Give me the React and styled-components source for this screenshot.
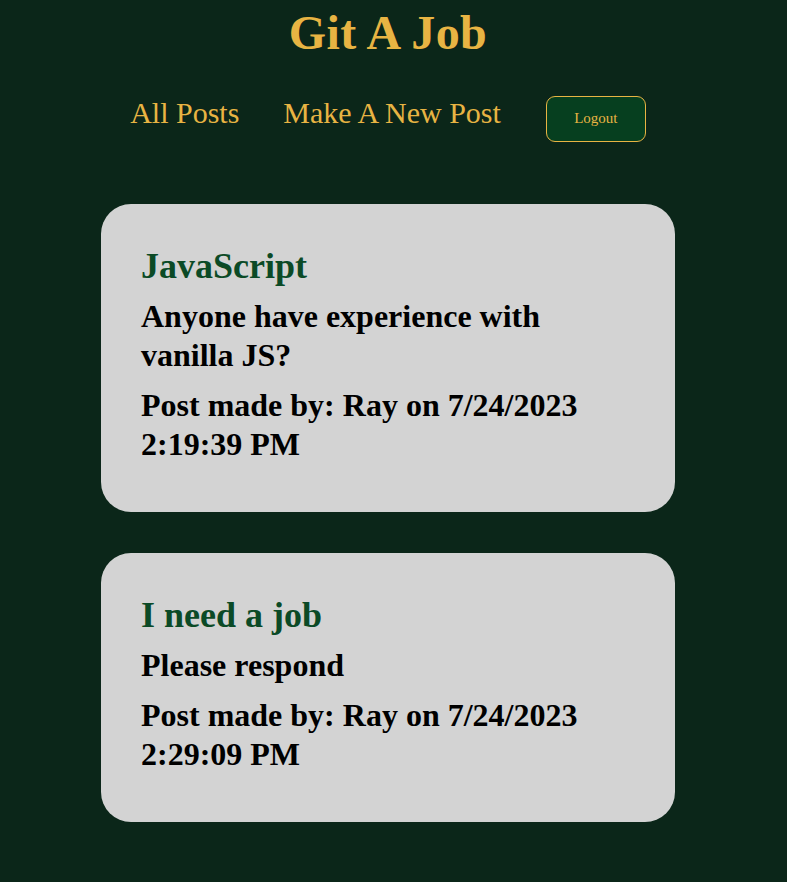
import React from 'react';
import styled, { createGlobalStyle } from 'styled-components';

const GlobalStyle = createGlobalStyle`
  html, body {
    margin: 0;
    padding: 0;
    background: #0b2619;
  }
  body {
    font-family: 'Liberation Serif', 'Times New Roman', serif;
  }
  #root {
    width: 776px;
  }
`;

const Page = styled.div`
  min-height: 882px;
  padding-bottom: 40px;
`;

const Header = styled.header`
  display: flex;
  flex-direction: column;
  align-items: center;
`;

const Title = styled.h1`
  margin: 5px 0 0;
  font-size: 48px;
  line-height: 56px;
  font-weight: bold;
  letter-spacing: 0.4px;
  color: #e8b443;
`;

const Nav = styled.nav`
  display: flex;
  align-items: baseline;
  justify-content: center;
  gap: 44px;
  margin-top: 34px;
`;

const NavLink = styled.a`
  font-size: 30px;
  line-height: 36px;
  color: #e8b443;
  text-decoration: none;
  cursor: pointer;
`;

const LogoutButton = styled.button`
  width: 100px;
  height: 46px;
  margin-left: 1px;
  padding: 0;
  border: 1px solid #e8b443;
  border-radius: 9px;
  background: #063f1f;
  color: #e8b443;
  font-family: 'Liberation Serif', 'Times New Roman', serif;
  font-size: 15px;
  cursor: pointer;
`;

const Feed = styled.main`
  display: flex;
  flex-direction: column;
  align-items: center;
  gap: 41px;
  margin-top: 62px;
`;

const Card = styled.article`
  box-sizing: border-box;
  width: 574px;
  padding: 42px 40px 48px;
  border-radius: 30px;
  background: #d3d3d3;
`;

const CardTitle = styled.h2`
  margin: 0;
  font-size: 36px;
  line-height: 40px;
  font-weight: bold;
  color: #0b4a26;
`;

const CardText = styled.p`
  margin: 11px 0 0;
  font-size: 32px;
  line-height: 39px;
  font-weight: bold;
  color: #000;
`;

const posts = [
  {
    id: 1,
    title: 'JavaScript',
    body: 'Anyone have experience with vanilla JS?',
    author: 'Ray',
    date: '7/24/2023 2:19:39 PM',
  },
  {
    id: 2,
    title: 'I need a job',
    body: 'Please respond',
    author: 'Ray',
    date: '7/24/2023 2:29:09 PM',
  },
];

const App = () => (
  <Page>
    <GlobalStyle />
    <Header>
      <Title>Git A Job</Title>
      <Nav>
        <NavLink>All Posts</NavLink>
        <NavLink>Make A New Post</NavLink>
        <LogoutButton>Logout</LogoutButton>
      </Nav>
    </Header>
    <Feed>
      {posts.map((post) => (
        <Card key={post.id}>
          <CardTitle>{post.title}</CardTitle>
          <CardText>{post.body}</CardText>
          <CardText>
            Post made by: {post.author} on {post.date}
          </CardText>
        </Card>
      ))}
    </Feed>
  </Page>
);

export default App;
